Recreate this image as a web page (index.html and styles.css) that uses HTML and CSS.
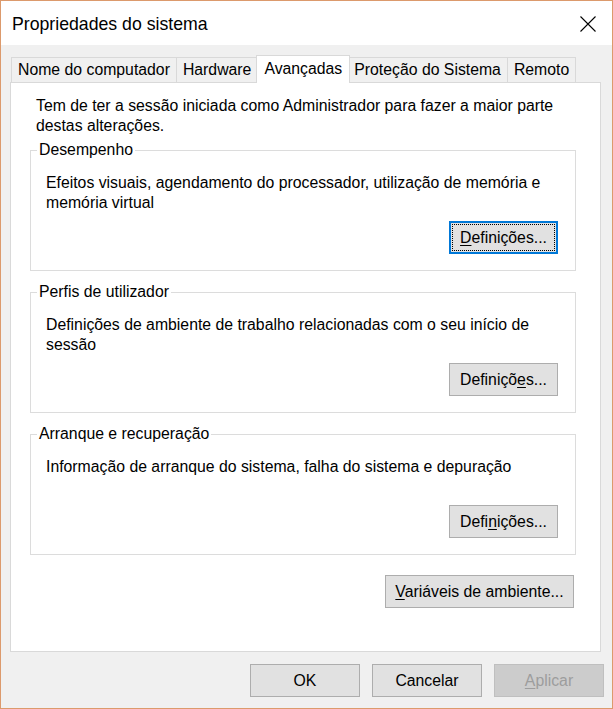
FILE: index.html
```html
<!DOCTYPE html>
<html lang="pt">
<head>
<meta charset="utf-8">
<title>Propriedades do sistema</title>
<link rel="stylesheet" href="styles.css">
</head>
<body>
<div class="window">
  <div class="titlebar">
    <span class="title">Propriedades do sistema</span>
    <svg class="close" viewBox="0 0 16 16" aria-hidden="true">
      <path d="M0.5 0.5 L15.5 15.5 M15.5 0.5 L0.5 15.5" stroke="#000" stroke-width="1.1" fill="none"/>
    </svg>
  </div>
  <div class="content">
    <div class="tabs">
      <div class="tab">Nome do computador</div>
      <div class="tab">Hardware</div>
      <div class="tab active">Avançadas</div>
      <div class="tab">Proteção do Sistema</div>
      <div class="tab">Remoto</div>
    </div>
    <div class="panel">
      <p class="intro">Tem de ter a sessão iniciada como Administrador para fazer a maior parte<br>destas alterações.</p>
      <fieldset class="group">
        <legend>Desempenho</legend>
        <p>Efeitos visuais, agendamento do processador, utilização de memória e<br>memória virtual</p>
        <div class="actions"><button class="btn btn-def btn-focus"><u>D</u>efinições...</button></div>
      </fieldset>
      <fieldset class="group">
        <legend>Perfis de utilizador</legend>
        <p>Definições de ambiente de trabalho relacionadas com o seu início de<br>sessão</p>
        <div class="actions"><button class="btn btn-def">Definiçõ<u>e</u>s...</button></div>
      </fieldset>
      <fieldset class="group">
        <legend>Arranque e recuperação</legend>
        <p>Informação de arranque do sistema, falha do sistema e depuração</p>
        <div class="actions"><button class="btn btn-def">Defi<u>n</u>ições...</button></div>
      </fieldset>
      <div class="env"><button class="btn btn-env"><u>V</u>ariáveis de ambiente...</button></div>
    </div>
    <div class="footer">
      <button class="btn btn-foot">OK</button>
      <button class="btn btn-foot">Cancelar</button>
      <button class="btn btn-foot" disabled><u>A</u>plicar</button>
    </div>
  </div>
</div>
</body>
</html>
```

FILE: styles.css
```css
* { box-sizing: border-box; }
html, body { margin: 0; padding: 0; }
body {
  font-family: "Liberation Sans", Arial, sans-serif;
  font-size: 15.8px;
  line-height: 20px;
  color: #000;
  background: #fff;
}
.window {
  width: 613px;
  height: 709px;
  border: 1px solid #dc9a6c;
  display: flex;
  flex-direction: column;
  background: #f0f0f0;
}
.titlebar {
  flex: none;
  height: 44px;
  background: #fff;
  display: flex;
  align-items: center;
  justify-content: space-between;
  padding: 0 16px 0 11px;
}
.title { font-size: 17.7px; line-height: 22px; margin-top: 1px; }
.close { width: 16px; height: 16px; margin-top: 2px; }
.content {
  flex: 1;
  padding: 10px 8px 0 9px;
  display: flex;
  flex-direction: column;
}
.tabs {
  display: flex;
  align-items: flex-end;
  height: 27px;
  margin-left: 1px;
}
.tab {
  height: 25px;
  border: 1px solid #d9d9d9;
  border-bottom: none;
  background: #f0f0f0;
  padding: 2px 6px 0;
  margin-left: -1px;
  white-space: nowrap;
}
.tab:first-child { margin-left: 0; }
.tab.active {
  position: relative;
  height: 28px;
  background: #fff;
  margin: 0 -2px -1px -2px;
  padding: 3px 7px 0;
}
.panel {
  height: 570px;
  margin-right: 3px;
  background: #fff;
  border: 1px solid #d9d9d9;
  padding: 13px 24px 0 19px;
  display: flex;
  flex-direction: column;
}
.intro { margin: 0 0 4px 6px; }
.group {
  margin: 0;
  min-width: 0;
  border: 1px solid #dcdcdc;
  padding: 13px 17px 16px 15px;
}
.group + .group { margin-top: 11px; }
.group legend {
  padding: 0 2px;
  margin-left: -9px;
  line-height: 20px;
}
.group p { margin: 0; height: 45px; }
.actions {
  display: flex;
  justify-content: flex-end;
  margin-top: 3px;
}
.btn {
  font: inherit;
  line-height: 20px;
  height: 33px;
  padding: 0;
  color: #000;
  background: #e1e1e1;
  border: 1px solid #adadad;
  border-radius: 0;
}
.btn u { text-underline-offset: 2px; }
.btn-def { width: 109px; }
.btn-focus {
  border-color: #0078d7;
  box-shadow: inset 0 0 0 1px #0078d7;
  outline: 1px dotted #000;
  outline-offset: -4px;
}
.env {
  display: flex;
  justify-content: flex-end;
  margin: 20px 2px 0 0;
}
.btn-env { width: 189px; }
.footer {
  display: flex;
  justify-content: flex-end;
  gap: 12px;
  margin-top: 12px;
}
.btn-foot { width: 110px; }
.btn:disabled {
  background: #cccccc;
  border-color: #bfbfbf;
  color: #9d9d9d;
}
```
